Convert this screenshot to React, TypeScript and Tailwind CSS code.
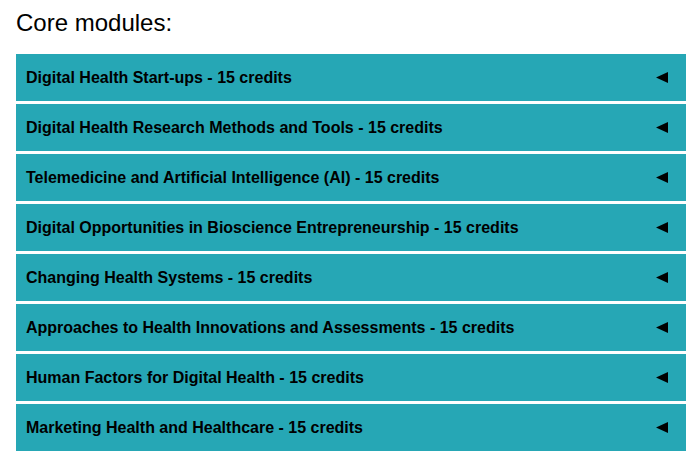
import React from "react";

const modules = [
  "Digital Health Start-ups - 15 credits",
  "Digital Health Research Methods and Tools - 15 credits",
  "Telemedicine and Artificial Intelligence (AI) - 15 credits",
  "Digital Opportunities in Bioscience Entrepreneurship - 15 credits",
  "Changing Health Systems - 15 credits",
  "Approaches to Health Innovations and Assessments - 15 credits",
  "Human Factors for Digital Health - 15 credits",
  "Marketing Health and Healthcare - 15 credits",
];

export default function App() {
  return (
    <div className="bg-white w-[699px] h-[465px] px-4 pt-[9px]" style={{ fontFamily: '"Liberation Sans", Arial, sans-serif' }}>
      <h2 className="text-[24px] leading-[27px] text-black">Core modules:</h2>
      <div className="mt-[18px] flex flex-col gap-[3px] w-[670px]">
        {modules.map((m) => (
          <div key={m} className="h-[47px] bg-[#26a7b5] flex items-center justify-between pl-[10px] pr-[18px]">
            <span className="text-[16px] font-bold text-black">{m}</span>
            <svg width="12" height="11" viewBox="0 0 12 11" className="block">
              <polygon points="0,5.5 12,0 12,11" fill="#000" />
            </svg>
          </div>
        ))}
      </div>
    </div>
  );
}
